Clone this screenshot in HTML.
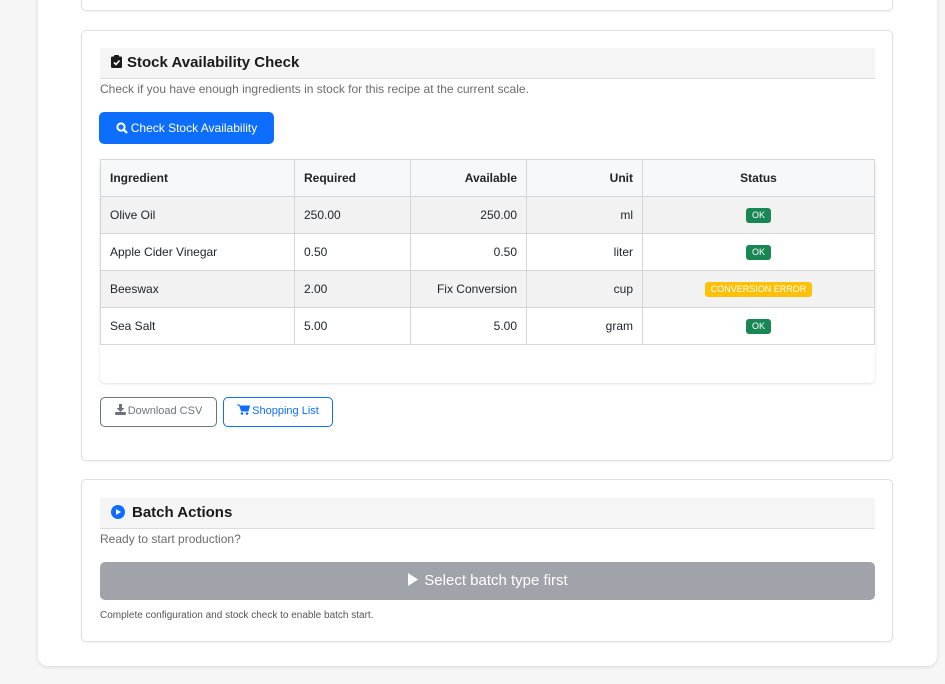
<!DOCTYPE html>
<html><head><meta charset="utf-8"><style>
*{box-sizing:border-box;margin:0;padding:0}
body{width:945px;height:684px;background:#f6f6f6;font-family:"Liberation Sans",Arial,sans-serif;position:relative;overflow:hidden;color:#212529}
.outer{position:absolute;left:38px;top:-20px;width:899px;height:686px;background:#fff;border-radius:10px;box-shadow:0 1px 4px rgba(0,0,0,.12)}
.card{position:absolute;left:81px;width:812px;background:#fff;border:1px solid #e0e0e0;border-radius:5px;box-shadow:0 1px 2px rgba(0,0,0,.06)}
.hdr{position:absolute;left:18px;width:775px;height:31px;background:#f5f5f5;border-bottom:1px solid #dcdcdc;font-size:15px;font-weight:bold;line-height:30px;padding-left:11px;color:#1a1a1a}
.desc{position:absolute;left:18px;font-size:12px;color:#6c6c6c}
table{border-collapse:collapse;font-size:12px;position:absolute;left:18px;top:128px;width:775px}
td,th{border:1px solid #d6d6d6;height:37px;padding:0 9px}
th{background:#f7f8fa;font-weight:bold;text-align:left}
.r{text-align:right}.c{text-align:center}
tr.g td{background:#f2f2f2}
.b{display:inline-block;font-size:9px;color:#fff;border-radius:3px;padding:2px 6px;line-height:11px}
.ok{background:#198754}.warn{background:#ffc107}
.btn{position:absolute;font-size:11px;border-radius:5px;line-height:27px;text-align:center}
</style></head><body>
<div class="outer"></div>
<div class="card" style="top:-10px;height:21px"></div>
<div class="card" style="top:30px;height:431px">
 <div class="hdr" style="top:17px"><svg width="11" height="13" viewBox="0 0 11 13" style="vertical-align:-1px;margin-right:5px"><rect x="0" y="1.5" width="11" height="11.5" rx="1.5" fill="#1a1a1a"/><rect x="3" y="0" width="5" height="3" rx="1" fill="#1a1a1a"/><path d="M3 7.5l2 2 3.5-4" stroke="#fff" stroke-width="1.6" fill="none"/></svg>Stock Availability Check</div>
 <div class="desc" style="top:51px">Check if you have enough ingredients in stock for this recipe at the current scale.</div>
 <div class="btn" style="left:17px;top:81px;width:175px;height:32px;background:#0d6efd;color:#fff;font-size:12px;line-height:32px"><svg width="12" height="12" viewBox="0 0 12 12" style="vertical-align:-2px;margin-right:3px"><circle cx="5" cy="5" r="3.6" stroke="#fff" stroke-width="2" fill="none"/><path d="M7.5 7.5l3.5 3.5" stroke="#fff" stroke-width="2.2"/></svg>Check Stock Availability</div>
 <div style="position:absolute;left:18px;top:129px;width:775px;height:223px;border-radius:6px;box-shadow:0 1px 3px rgba(0,0,0,.12)"></div>
 <table>
  <tr><th style="width:194px">Ingredient</th><th style="width:116px">Required</th><th class="r" style="width:116px">Available</th><th class="r" style="width:116px">Unit</th><th class="c">Status</th></tr>
  <tr class="g"><td>Olive Oil</td><td>250.00</td><td class="r">250.00</td><td class="r">ml</td><td class="c"><span class="b ok">OK</span></td></tr>
  <tr><td>Apple Cider Vinegar</td><td>0.50</td><td class="r">0.50</td><td class="r">liter</td><td class="c"><span class="b ok">OK</span></td></tr>
  <tr class="g"><td>Beeswax</td><td>2.00</td><td class="r">Fix Conversion</td><td class="r">cup</td><td class="c"><span class="b warn">CONVERSION ERROR</span></td></tr>
  <tr><td>Sea Salt</td><td>5.00</td><td class="r">5.00</td><td class="r">gram</td><td class="c"><span class="b ok">OK</span></td></tr>
 </table>
 <div class="btn" style="left:18px;top:366px;width:117px;height:30px;border:1px solid #6c757d;color:#6c757d"><svg width="11" height="11" viewBox="0 0 11 11" style="vertical-align:-1px;margin-right:2px"><path d="M4 0h3v4h2.5L5.5 8 1.5 4H4z" fill="#6c757d"/><rect x="0" y="8" width="11" height="3" rx="1" fill="#6c757d"/></svg>Download CSV</div>
 <div class="btn" style="left:141px;top:366px;width:110px;height:30px;border:1px solid #0d6efd;color:#0d6efd"><svg width="13" height="11" viewBox="0 0 13 11" style="vertical-align:-1px;margin-right:2px"><path d="M0 1h2.5l2 6h6.5l1.5-5H3.5" fill="#0d6efd" stroke="#0d6efd"/><circle cx="5" cy="9.5" r="1.3" fill="#0d6efd"/><circle cx="10" cy="9.5" r="1.3" fill="#0d6efd"/></svg>Shopping List</div>
</div>
<div class="card" style="top:479px;height:163px">
 <div class="hdr" style="top:18px"><svg width="14" height="14" viewBox="0 0 14 14" style="vertical-align:-2px;margin-right:7px"><circle cx="7" cy="7" r="7" fill="#0d6efd"/><path d="M5 4v6l5-3z" fill="#fff"/></svg>Batch Actions</div>
 <div class="desc" style="top:52px">Ready to start production?</div>
 <div class="btn" style="left:18px;top:82px;width:775px;height:38px;background:#a0a4aa;color:#fff;font-size:15px;line-height:37px"><svg width="12" height="15" viewBox="0 0 12 15" style="vertical-align:-2px;margin-right:5px"><path d="M1 1v13l10-6.5z" fill="#fff"/></svg>Select batch type first</div>
 <div class="desc" style="top:130px;font-size:10px;color:#555">Complete configuration and stock check to enable batch start.</div>
</div>
</body></html>
